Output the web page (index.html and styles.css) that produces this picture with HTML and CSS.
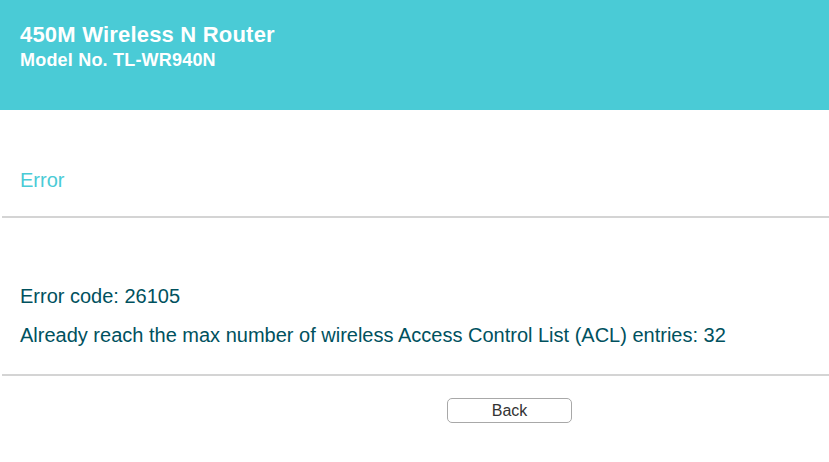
FILE: index.html
```html
<!DOCTYPE html>
<html>
<head>
<meta charset="utf-8">
<link rel="stylesheet" href="styles.css">
</head>
<body>
<div class="header">
  <div class="title">450M Wireless N Router</div>
  <div class="model">Model No. TL-WR940N</div>
</div>
<div class="heading">Error</div>
<div class="rule"></div>
<div class="content">
  <p class="line">Error code: 26105</p>
  <p class="line">Already reach the max number of wireless Access Control List (ACL) entries: 32</p>
</div>
<div class="rule"></div>
<div class="actions">
  <button class="btn">Back</button>
</div>
</body>
</html>
```
FILE: styles.css
```css
html, body {
  margin: 0;
  padding: 0;
  background: #fff;
  font-family: "Liberation Sans", Arial, sans-serif;
}
.header {
  background: #4acbd6;
  height: 110px;
  box-sizing: border-box;
  padding: 22px 0 0 20px;
  color: #fff;
  font-weight: bold;
}
.title {
  font-size: 22px;
  line-height: 26px;
  letter-spacing: 0.2px;
}
.model {
  font-size: 18px;
  line-height: 22px;
  margin-top: 1px;
  letter-spacing: 0.2px;
}
.heading {
  color: #4acbd6;
  font-size: 20px;
  line-height: 24px;
  padding: 58px 0 0 20px;
  height: 106px;
  box-sizing: border-box;
}
.rule {
  margin-left: 2px;
  height: 2px;
  background: #d4d4d4;
}
.content {
  padding: 66px 0 27px 20px;
  color: #00515e;
  font-size: 20px;
}
.line {
  margin: 0;
  line-height: 24px;
}
.line + .line {
  margin-top: 15px;
}
.actions {
  display: flex;
  justify-content: flex-start;
  padding: 22px 0 0 447px;
}
.btn {
  width: 125px;
  height: 25px;
  box-sizing: border-box;
  border: 1px solid #a8a8a8;
  border-radius: 5px;
  background: #fff;
  font-family: "Liberation Sans", Arial, sans-serif;
  font-size: 16px;
  color: #333;
  padding: 0;
}
```
